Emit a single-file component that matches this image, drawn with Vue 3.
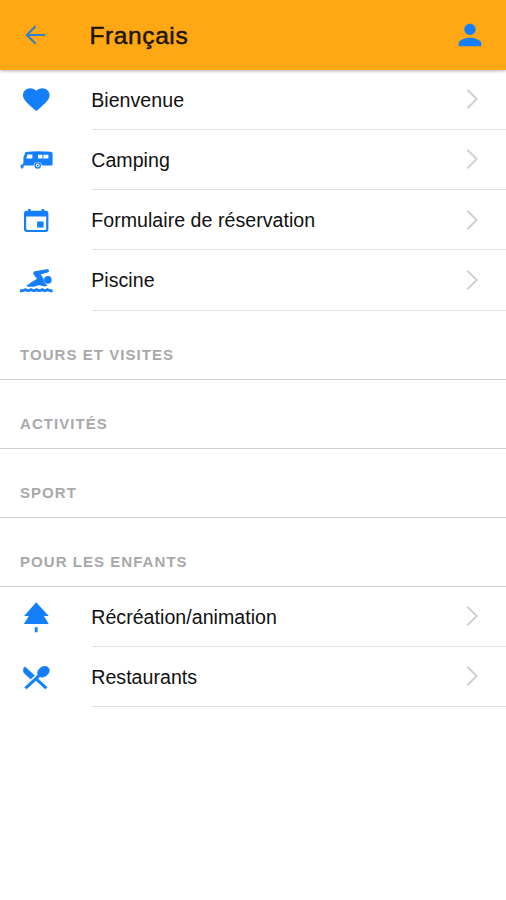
<!--
  App.vue — Campsite guide menu (French)
  Toolbar, main entries, then the titled sections
-->
<template>
  <div class="page">
    <header class="toolbar">
      <button class="tool-btn back" aria-label="Retour">
        <svg width="24" height="24" viewBox="0 0 24 24">
          <path d="M22 12H3.8M12.6 3.2L3.8 12l8.8 8.8" fill="none" stroke="currentColor" stroke-width="2.1" />
        </svg>
      </button>
      <h1 class="title">Français</h1>
      <button class="tool-btn user" aria-label="Profil">
        <svg width="34" height="34" viewBox="0 0 24 24">
          <path
            fill="currentColor"
            d="M12 12c2.21 0 4-1.79 4-4s-1.79-4-4-4-4 1.79-4 4 1.79 4 4 4zm0 2c-2.67 0-8 1.34-8 4v2h16v-2c0-2.66-5.33-4-8-4z"
          />
        </svg>
      </button>
    </header>

    <main>
      <section v-for="(group, i) in groups" :key="i">
        <h2 v-if="group.title" class="section-title">{{ group.title }}</h2>

        <a v-for="item in group.items" :key="item.label" class="row">
          <svg class="icon" viewBox="0 0 36 36" fill="currentColor">
            <path
              v-if="item.icon === 'heart'"
              transform="translate(2.3 2.4) scale(1.333 1.25)"
              d="M12 21.35l-1.45-1.32C5.4 15.36 2 12.28 2 8.5 2 5.42 4.42 3 7.5 3c1.74 0 3.41.81 4.5 2.09C13.09 3.81 14.76 3 16.5 3 19.58 3 22 5.42 22 8.5c0 3.78-3.4 6.86-8.55 11.54L12 21.35z"
            />
            <g v-else-if="item.icon === 'caravan'">
              <path
                fill-rule="evenodd"
                d="M7.6 10Q19 8.6 32.6 9.8Q34.6 10 34.6 11.8V22.6Q34.6 23.4 33.8 23.4H23.8A4.2 4.2 0 0 0 15.6 23.4H5.6V25.8H4.6V26.8H3.6V25.8H2.6V23.4L5.4 21.4V15.6zM9.4 12.6L8.2 16.4H14.4V12.6zM20 12.8V16.4H30.4V12.8z"
              />
              <path d="M24.4 12.8h1v3.6h-1z" />
              <circle cx="19.7" cy="23.4" r="2.6" fill="none" stroke="currentColor" stroke-width="1.3" />
              <circle cx="19.7" cy="23.4" r="1" />
            </g>
            <path
              v-else-if="item.icon === 'calendar'"
              fill-rule="evenodd"
              d="M10.1 7.1h2.6v1.7h10.9V7.1h2.6v1.7H28a2.4 2.4 0 0 1 2.4 2.4v16.4a2.4 2.4 0 0 1-2.4 2.4H8.4A2.4 2.4 0 0 1 6 27.6V11.2a2.4 2.4 0 0 1 2.4-2.4h1.7zM8.2 14.6v12.2q0 1.1 1.1 1.1h17.8q1.1 0 1.1-1.1V14.6zM19.1 19.4h6.5v6.2h-6.5z"
            />
            <g v-else-if="item.icon === 'swim'">
              <path d="M17 9.3L28.8 7.2Q30.8 7 31 8.6T29.8 10.6L22.8 12.2L25.8 17.6Q26.2 21.4 29.6 23.6Q27 25 24.6 24Q21 22.4 17.8 24.2Q13.4 25.6 8 24L13 20.6L19 16.8L15.6 12.4Q14.6 10 17 9.3z" />
              <circle cx="29.9" cy="17.9" r="3.8" />
              <path
                d="M2 28.6q2.8.6 5.4-1q2.8 2 5.6 0q2.8 2 5.6 0q2.8 2 5.6 0q2.8 2 5.4 0q2.4 1.6 5 1"
                fill="none"
                stroke="currentColor"
                stroke-width="2.8"
              />
            </g>
            <path
              v-else-if="item.icon === 'tree'"
              d="M18.2 3.2L30.7 17.1H26L30.7 24.9H5.9L10.8 17.1H6.1zM16.8 28.2h2.8v5.1h-2.8z"
            />
            <path
              v-else-if="item.icon === 'restaurant'"
              transform="translate(1.6 3.4) scale(1.36 1.25)"
              stroke="currentColor"
              stroke-width=".45"
              d="M8.1 13.34l2.83-2.83L3.91 3.5c-1.56 1.56-1.56 4.09 0 5.66l4.19 4.18zm6.78-1.81c1.53.71 3.68.21 5.27-1.38 1.91-1.91 2.28-4.65.81-6.12-1.46-1.46-4.2-1.1-6.12.81-1.59 1.59-2.09 3.74-1.38 5.27L3.7 19.87l1.41 1.41L12 14.41l6.88 6.88 1.41-1.41L13.41 13l1.47-1.47z"
            />
          </svg>
          <span class="row-body">
            <span class="label">{{ item.label }}</span>
            <svg class="chevron" width="14" height="22" viewBox="0 0 14 22">
              <path d="M2.4 1.8L11.6 11l-9.2 9.2" fill="none" stroke="currentColor" stroke-width="2.1" />
            </svg>
          </span>
        </a>
      </section>
    </main>
  </div>
</template>

<script setup>
const groups = [
  {
    items: [
      { label: 'Bienvenue', icon: 'heart' },
      { label: 'Camping', icon: 'caravan' },
      { label: 'Formulaire de réservation', icon: 'calendar' },
      { label: 'Piscine', icon: 'swim' },
    ],
  },
  { title: 'TOURS ET VISITES', items: [] },
  { title: 'ACTIVITÉS', items: [] },
  { title: 'SPORT', items: [] },
  {
    title: 'POUR LES ENFANTS',
    items: [
      { label: 'Récréation/animation', icon: 'tree' },
      { label: 'Restaurants', icon: 'restaurant' },
    ],
  },
]
</script>

<style>
body {
  margin: 0;
  background: #fff;
}
</style>

<style scoped>
.page {
  min-height: 900px;
  background: #fff;
  color: #111;
  font-family: "Liberation Sans", Arial, sans-serif;
}
.toolbar {
  position: relative;
  display: flex;
  align-items: center;
  box-sizing: border-box;
  height: 69.5px;
  padding: 1px 19px 0 23px;
  background: #ffa813;
  box-shadow: 0 1px 3px rgba(0,0,0,.3);
}
.tool-btn {
  display: flex;
  padding: 0;
  border: 0;
  background: none;
  color: #147efb;
}
.tool-btn.back {
  color: #2f80d0;
}
.title {
  flex: 1;
  margin: 2px 0 0 42.5px;
  font-size: 24.5px;
  font-weight: 400;
  letter-spacing: .6px;
  line-height: 30px;
  color: #1c1405;
  -webkit-text-stroke: .5px #1c1405;
}
.row {
  display: flex;
  align-items: center;
  height: 60.25px;
  padding-left: 18px;
}
.icon {
  flex: none;
  width: 36px;
  height: 36px;
  color: #147efb;
}
.row-body {
  flex: 1;
  display: flex;
  align-items: center;
  justify-content: space-between;
  box-sizing: border-box;
  height: 100%;
  margin-left: 38px;
  padding-right: 27px;
  border-bottom: 1px solid #dedede;
}
.label {
  margin: 1px 0 0 -.8px;
  font-size: 19.6px;
  letter-spacing: .03px;
  line-height: 24px;
}
.chevron {
  color: #d2d2d2;
}
.section-title {
  box-sizing: border-box;
  height: 69px;
  margin: 0;
  padding: 35px 20px 0;
  border-bottom: 1px solid #d0d0d0;
  font-size: 15px;
  font-weight: 700;
  letter-spacing: 1.05px;
  line-height: 18px;
  color: #a9a9a9;
}
</style>
